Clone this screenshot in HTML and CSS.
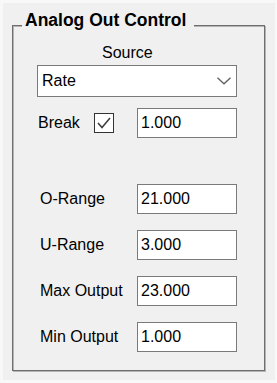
FILE: index.html
```html
<!DOCTYPE html>
<html lang="en">
<head>
<meta charset="UTF-8" />
<meta name="viewport" content="width=device-width, initial-scale=1" />
<title>Analog Out Control</title>
<link rel="stylesheet" href="styles.css">
</head>
<body>

<div class="window">
  <div class="group">
    <span class="group-title">Analog Out Control</span>

    <div class="source-label">Source</div>
    <div class="combo" role="combobox" aria-expanded="false">
      <span>Rate</span>
      <svg width="14" height="8" viewBox="0 0 14 8">
        <path d="M0.5 0.8 L7 6.8 L13.5 0.8" fill="none" stroke="#606060" stroke-width="1.3" />
      </svg>
    </div>

    <div class="row">
      <span class="label label-break">Break</span>
      <span class="check" role="checkbox" aria-checked="true">
        <svg width="18" height="18" viewBox="0 0 18 18">
          <path d="M3 9 L7 13.5 L15 4" fill="none" stroke="#3c3c3c" stroke-width="1.5" />
        </svg>
      </span>
      <input class="field" type="text" value="1.000">
    </div>

    <div class="ranges">
      <div class="row">
        <span class="label">O-Range</span>
        <input class="field" type="text" value="21.000">
      </div>
      <div class="row">
        <span class="label">U-Range</span>
        <input class="field" type="text" value="3.000">
      </div>
      <div class="row">
        <span class="label">Max Output</span>
        <input class="field" type="text" value="23.000">
      </div>
      <div class="row">
        <span class="label">Min Output</span>
        <input class="field" type="text" value="1.000">
      </div>
    </div>
  </div>
</div>

</body>
</html>
```

FILE: styles.css
```css
/* Basic Reset */
* {
  margin: 0; padding: 0; box-sizing: border-box;
}
body {
  font-family: "Liberation Sans", Arial, sans-serif;
  font-size: 16px;
  color: #000;
  background: #f8f8f8;
}
.window {
  margin: 3px 2px 3px 3px;
  height: 377px;
  background: #f0f0f0;
  padding: 22px 0 0 9px;
}
/* Group box */
.group {
  position: relative;
  width: 253px;
  height: 346px;
  border: 1px solid #6e6e6e;
  box-shadow: 1px 1px 0 #b4b4b4, inset 1px 1px 0 #b4b4b4;
  padding: 18px 0 0 24px;
}
.group-title {
  position: absolute;
  left: 9px;
  top: -16px;
  padding: 0 8px 0 3px;
  background: #f0f0f0;
  font-weight: bold;
  font-size: 17.5px;
  line-height: 20px;
}
.source-label {
  margin-left: 65px;
  line-height: 18px;
}
/* Combo box */
.combo {
  margin-top: 3px;
  width: 200px;
  height: 32px;
  border: 1px solid #7a7a7a;
  background: #fff;
  display: flex;
  align-items: center;
  justify-content: space-between;
  padding: 0 5px 0 4px;
}
/* Rows */
.row {
  display: flex;
  align-items: center;
  width: 200px;
  height: 30px;
  margin-top: 11px;
}
.label {
  margin-left: 3px;
}
.label-break {
  margin-left: 1px;
  width: 56px;
}
.check {
  width: 20px;
  height: 20px;
  border: 1px solid #333;
  background: #fff;
  display: flex;
  align-items: center;
  justify-content: center;
}
.field {
  margin-left: auto;
  width: 100px;
  height: 30px;
  border: 1px solid #7a7a7a;
  background: #fff;
  padding: 0 3px;
  font-family: inherit;
  font-size: 16px;
  color: #000;
  outline: none;
}
.ranges {
  margin-top: 46px;
  display: flex;
  flex-direction: column;
  gap: 16px;
}
.ranges .row {
  margin-top: 0;
}
```
